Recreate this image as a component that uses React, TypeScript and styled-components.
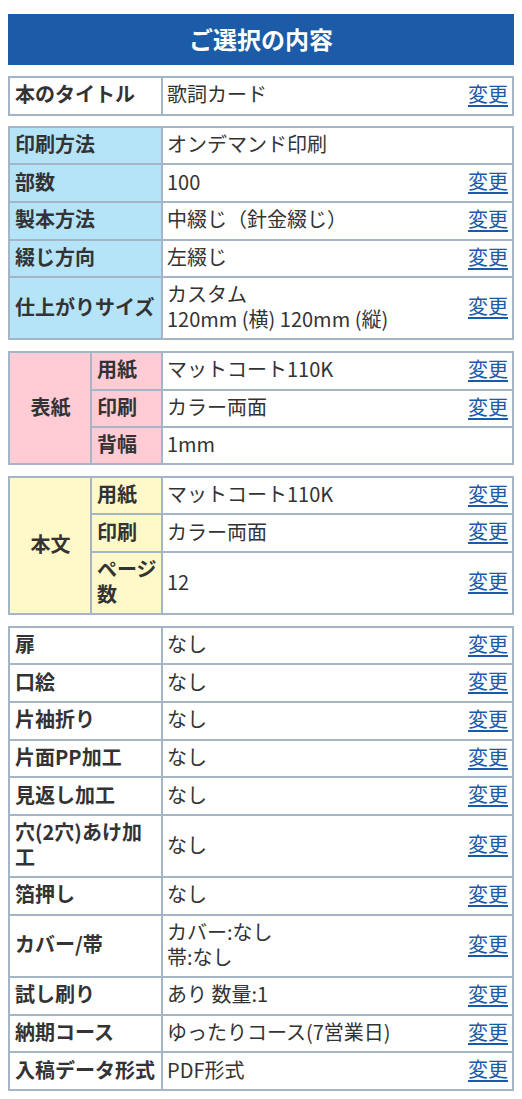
import React, { ReactNode } from "react"
import styled, { createGlobalStyle } from "styled-components"

type Tone = "white" | "blue" | "pink" | "yellow"

type Row = {
  label: ReactNode
  value: ReactNode
  link?: boolean
}

type Group = {
  title: string
  tone: Tone
  rows: Row[]
}

const tones: Record<Tone, string> = {
  white: "#ffffff",
  blue: "#b5e3f8",
  pink: "#ffccd5",
  yellow: "#fff9c9",
}

const titleRow: Row[] = [{ label: "本のタイトル", value: "歌詞カード", link: true }]

const printRows: Row[] = [
  { label: "印刷方法", value: "オンデマンド印刷" },
  { label: "部数", value: "100", link: true },
  { label: "製本方法", value: "中綴じ（針金綴じ）", link: true },
  { label: "綴じ方向", value: "左綴じ", link: true },
  {
    label: "仕上がりサイズ",
    value: (
      <>
        カスタム
        <br />
        120mm (横) 120mm (縦)
      </>
    ),
    link: true,
  },
]

const groups: Group[] = [
  {
    title: "表紙",
    tone: "pink",
    rows: [
      { label: "用紙", value: "マットコート110K", link: true },
      { label: "印刷", value: "カラー両面", link: true },
      { label: "背幅", value: "1mm" },
    ],
  },
  {
    title: "本文",
    tone: "yellow",
    rows: [
      { label: "用紙", value: "マットコート110K", link: true },
      { label: "印刷", value: "カラー両面", link: true },
      { label: "ページ数", value: "12", link: true },
    ],
  },
]

const optionRows: Row[] = [
  { label: "扉", value: "なし", link: true },
  { label: "口絵", value: "なし", link: true },
  { label: "片袖折り", value: "なし", link: true },
  { label: "片面PP加工", value: "なし", link: true },
  { label: "見返し加工", value: "なし", link: true },
  { label: "穴(2穴)あけ加工", value: "なし", link: true },
  { label: "箔押し", value: "なし", link: true },
  {
    label: "カバー/帯",
    value: (
      <>
        カバー:なし
        <br />
        帯:なし
      </>
    ),
    link: true,
  },
  { label: "試し刷り", value: "あり 数量:1", link: true },
  { label: "納期コース", value: "ゆったりコース(7営業日)", link: true },
  { label: "入稿データ形式", value: "PDF形式", link: true },
]

const Value = ({ row }: { row: Row }) => (
  <ValueCell>
    <ValueInner>
      <span>{row.value}</span>
      {row.link ? <ChangeLink href="#">変更</ChangeLink> : null}
    </ValueInner>
  </ValueCell>
)

const SimpleTable = ({ rows, tone }: { rows: Row[]; tone: Tone }) => (
  <Table>
    <colgroup>
      <col style={{ width: 153 }} />
      <col />
    </colgroup>
    <tbody>
      {rows.map((row, i) => (
        <tr key={i}>
          <LabelCell $tone={tone}>{row.label}</LabelCell>
          <Value row={row} />
        </tr>
      ))}
    </tbody>
  </Table>
)

const GroupTable = ({ group }: { group: Group }) => (
  <Table>
    <colgroup>
      <col style={{ width: 82 }} />
      <col style={{ width: 71 }} />
      <col />
    </colgroup>
    <tbody>
      {group.rows.map((row, i) => (
        <tr key={i}>
          {i === 0 ? (
            <GroupCell $tone={group.tone} rowSpan={group.rows.length}>
              {group.title}
            </GroupCell>
          ) : null}
          <LabelCell $tone={group.tone}>{row.label}</LabelCell>
          <Value row={row} />
        </tr>
      ))}
    </tbody>
  </Table>
)

export default function App() {
  return (
    <Page>
      <GlobalStyle />
      <Heading>ご選択の内容</Heading>
      <SimpleTable rows={titleRow} tone="white" />
      <SimpleTable rows={printRows} tone="blue" />
      {groups.map((g) => (
        <GroupTable key={g.title} group={g} />
      ))}
      <SimpleTable rows={optionRows} tone="white" />
    </Page>
  )
}

const GlobalStyle = createGlobalStyle`
  body {
    margin: 0;
    background: #ffffff;
    font-family: "Noto Sans CJK JP", "Noto Sans", sans-serif;
    color: #333333;
  }
`

const Page = styled.div`
  padding: 14px 8px 8px;
  display: flex;
  flex-direction: column;
  gap: 10.5px;
`

const Heading = styled.h2`
  margin: 0 0 0.5px;
  height: 51px;
  padding-bottom: 3px;
  box-sizing: border-box;
  background: #1b5ba7;
  color: #ffffff;
  font-size: 24px;
  font-weight: 700;
  display: flex;
  align-items: center;
  justify-content: center;
`

const Table = styled.table`
  width: 100%;
  border-collapse: collapse;
  table-layout: fixed;
  border: 2px solid #a3b5c7;
  font-size: 20px;
  line-height: 25px;
`

const LabelCell = styled.th<{ $tone: Tone }>`
  border: 2px solid #a3b5c7;
  background: ${(p) => tones[p.$tone]};
  padding: 3px 4px 7px 5px;
  text-align: left;
  font-weight: 700;
  color: #333333;
`

const GroupCell = styled(LabelCell)`
  text-align: center;
  vertical-align: middle;
`

const ValueCell = styled.td`
  border: 2px solid #a3b5c7;
  padding: 3px 4px 7px;
  color: #333333;
`

const ValueInner = styled.div`
  display: flex;
  align-items: center;
  justify-content: space-between;
  gap: 8px;
`

const ChangeLink = styled.a`
  color: #1a5aa8;
  text-decoration: underline;
  text-underline-offset: 3px;
  line-height: 25.7px;
  white-space: nowrap;
`
